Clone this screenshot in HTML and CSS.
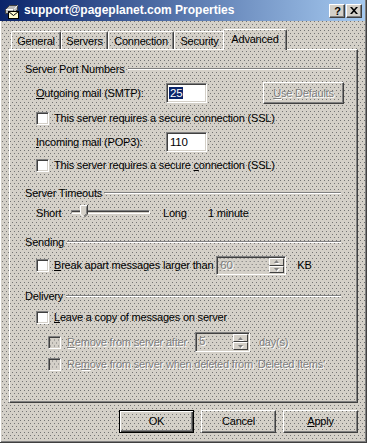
FILE: index.html
```html
<!DOCTYPE html>
<html>
<head>
<meta charset="utf-8">
<title>support@pageplanet.com Properties</title>
<link rel="stylesheet" href="styles.css">
</head>
<body>
<div class="window">
  <div class="titlebar">
    <svg class="ticon" width="16" height="16" viewBox="0 0 16 16">
      <path d="M1.5 6.5 L5.5 2.5 L13.5 2.5 L13.5 6.5 L9.5 10.5 L1.5 10.5 Z" fill="#b8b8b8" stroke="#404040"/>
      <path d="M2 6.5 L10 6.5 L13.5 2.5" fill="none" stroke="#ffffff"/>
      <path d="M9.5 6.5 L9.5 10.5" stroke="#606060"/>
      <rect x="4.5" y="8.5" width="10" height="7" fill="#fffbd0" stroke="#000"/>
      <path d="M4.5 8.5 L9.5 12.5 L14.5 8.5" fill="none" stroke="#000"/>
    </svg>
    <span class="title">support@pageplanet.com Properties</span>
    <div class="tbtns">
      <span class="tbtn help">?</span>
      <span class="tbtn">
        <svg width="8" height="7" viewBox="0 0 8 7"><path d="M0 0h2l2 2.3L6 0h2L5 3.5 8 7H6L4 4.7 2 7H0l3-3.5z" fill="#000"/></svg>
      </span>
    </div>
  </div>
  <div class="client">
    <div class="tabs">
      <div class="tab w-general">General</div>
      <div class="tab w-servers">Servers</div>
      <div class="tab w-connection">Connection</div>
      <div class="tab w-security">Security</div>
      <div class="tab selected w-advanced">Advanced</div>
    </div>
    <div class="panel">
      <div class="group-head"><span>Server Port Numbers</span><i class="etch"></i></div>
      <div class="row r-out">
        <span class="lbl"><u>O</u>utgoing mail (SMTP):</span>
        <span class="edit port"><span class="hl">25</span></span>
        <span class="btn defaults disabled"><u>U</u>se Defaults</span>
      </div>
      <div class="row r-cb1">
        <span class="cb"></span>
        <span class="cbtext">This server requires a secure connection (SSL)</span>
      </div>
      <div class="row r-in">
        <span class="lbl"><u>I</u>ncoming mail (POP3):</span>
        <span class="edit port">110</span>
      </div>
      <div class="row r-cb2">
        <span class="cb"></span>
        <span class="cbtext">This server requires a secure <u>c</u>onnection (SSL)</span>
      </div>

      <div class="group-head g2"><span>Server Timeouts</span><i class="etch"></i></div>
      <div class="row r-slider">
        <span class="short">Short</span>
        <span class="slider">
          <span class="track"></span>
          <svg class="thumb" width="9" height="13" viewBox="0 0 9 13">
            <path d="M0 0H8V9L4 13L0 9Z" fill="#d4d0c8"/>
            <path d="M0.5 9V0.5H7.5" fill="none" stroke="#fff"/>
            <path d="M0.5 9L4 12.5" fill="none" stroke="#fff"/>
            <path d="M7.5 0V9L4 12.5" fill="none" stroke="#404040"/>
            <path d="M6.5 1.5V8.6L4 11" fill="none" stroke="#808080"/>
          </svg>
        </span>
        <span class="long">Long</span>
        <span>1 minute</span>
      </div>

      <div class="group-head g3"><span>Sending</span><i class="etch"></i></div>
      <div class="row r-break">
        <span class="cb"></span>
        <span class="cbtext"><u>B</u>reak apart messages larger than</span>
        <span class="spin s60">
          <span class="spinval disabled">60</span>
          <span class="spinbtns">
            <span class="sbtn"><svg width="5" height="3" viewBox="0 0 5 3"><path d="M2.5 0L5 3H0Z" fill="#808080"/></svg></span>
            <span class="sbtn"><svg width="5" height="3" viewBox="0 0 5 3"><path d="M0 0H5L2.5 3Z" fill="#808080"/></svg></span>
          </span>
        </span>
        <span class="kb">KB</span>
      </div>

      <div class="group-head g4"><span>Delivery</span><i class="etch"></i></div>
      <div class="row r-leave">
        <span class="cb"></span>
        <span class="cbtext"><u>L</u>eave a copy of messages on server</span>
      </div>
      <div class="row r-after sub">
        <span class="cb dis"></span>
        <span class="cbtext disabled"><u>R</u>emove from server after</span>
        <span class="spin s5">
          <span class="spinval disabled">5</span>
          <span class="spinbtns">
            <span class="sbtn"><svg width="5" height="3" viewBox="0 0 5 3"><path d="M2.5 0L5 3H0Z" fill="#808080"/></svg></span>
            <span class="sbtn"><svg width="5" height="3" viewBox="0 0 5 3"><path d="M0 0H5L2.5 3Z" fill="#808080"/></svg></span>
          </span>
        </span>
        <span class="days disabled">day(s)</span>
      </div>
      <div class="row r-deleted sub">
        <span class="cb dis"></span>
        <span class="cbtext disabled">Re<u>m</u>ove from server when deleted from 'Deleted Items'</span>
      </div>
    </div>
    <div class="footer">
      <span class="btn default">OK</span>
      <span class="btn">Cancel</span>
      <span class="btn"><u>A</u>pply</span>
    </div>
  </div>
</div>
</body>
</html>
```

FILE: styles.css
```css
html, body {
  margin: 0;
  padding: 0;
}
body {
  font-family: "Liberation Sans", Arial, sans-serif;
  font-size: 11px;
  letter-spacing: -0.2px;
  line-height: 13px;
  color: #000;
  background: #d4d0c8;
}
u { text-decoration: underline; text-underline-offset: 1px; }

.window,
.tab,
.cb.dis,
.spin,
.btn {
  background-color: #d4d0c8;
  background-image:
    conic-gradient(from 270deg at 1px 1px, #747474 25%, transparent 0),
    conic-gradient(from 270deg at 1px 1px, #747474 25%, transparent 0);
  background-size: 4px 6px;
  background-position: 0 0, 2px 3px;
  background-attachment: fixed;
}

.window {
  width: 367px;
  height: 443px;
  box-sizing: border-box;
  display: flex;
  flex-direction: column;
  border-right: 1px solid #404040;
  border-bottom: 1px solid #404040;
  box-shadow: inset -1px -1px 0 #808080;
}

.titlebar {
  height: 21px;
  width: 365px;
  flex: none;
  display: flex;
  align-items: center;
  background: linear-gradient(to right, #0a246a, #a6caf0);
  padding-left: 4px;
  box-sizing: border-box;
}
.ticon { flex: none; }
.title {
  margin-left: 4px;
  color: #fff;
  font-weight: bold;
  font-size: 12px;
  letter-spacing: 0;
  white-space: nowrap;
}
.tbtns {
  margin-left: auto;
  margin-right: 3px;
  display: flex;
  gap: 1px;
}
.tbtn {
  width: 16px;
  height: 14px;
  box-sizing: border-box;
  display: flex;
  align-items: center;
  justify-content: center;
  background: #d4d0c8;
  border-top: 1px solid #fff;
  border-left: 1px solid #fff;
  border-right: 1px solid #404040;
  border-bottom: 1px solid #404040;
  box-shadow: inset -1px -1px 0 #808080;
  font-weight: bold;
  font-size: 11px;
  line-height: 12px;
  letter-spacing: 0;
}
.tbtn.help { padding-left: 1px; }

.client {
  flex: 1;
  display: flex;
  flex-direction: column;
  padding: 8px 0 0 9px;
  box-shadow: inset 1px 0 0 #fff;
}

.tabs {
  display: flex;
  align-items: flex-end;
  height: 20px;
  padding-left: 2px;
  position: relative;
  z-index: 2;
}
.tab {
  height: 18px;
  box-sizing: border-box;
  border-top: 1px solid #fff;
  border-left: 1px solid #fff;
  border-right: 1px solid #404040;
  box-shadow: inset -1px 0 0 #808080;
  border-radius: 2px 2px 0 0;
  display: flex;
  align-items: center;
  justify-content: center;
  padding-top: 1px;
  white-space: nowrap;
}
.w-general { width: 50px; }
.w-servers { width: 47px; }
.w-connection { width: 66px; }
.w-security { width: 51px; }
.tab.selected {
  width: 64px;
  height: 21px;
  margin-left: -2px;
  margin-bottom: -1px;
  padding-top: 0;
  padding-bottom: 2px;
  position: relative;
  z-index: 3;
}

.panel {
  width: 349px;
  height: 354px;
  box-sizing: border-box;
  border-top: 1px solid #fff;
  border-left: 1px solid #fff;
  border-right: 1px solid #404040;
  border-bottom: 1px solid #404040;
  box-shadow: inset -1px -1px 0 #808080;
  padding: 13px 13px 0 15px;
  display: flex;
  flex-direction: column;
}

.group-head {
  height: 13px;
  display: flex;
  align-items: center;
  white-space: nowrap;
}
.etch {
  flex: 1;
  height: 0;
  border-top: 1px solid #808080;
  border-bottom: 1px solid #fff;
  margin-left: 3px;
  margin-right: 3px;
  margin-top: -1px;
}
.g2, .g3, .g4 { margin-top: 15px; }

.row {
  display: flex;
  align-items: center;
  margin-left: 11px;
  white-space: nowrap;
}
.row.sub { margin-left: 23px; }

.r-out { margin-top: 6px; height: 22px; }
.r-cb1 { margin-top: 8px; height: 13px; }
.r-in { margin-top: 7px; height: 20px; }
.r-cb2 { margin-top: 7px; height: 13px; }
.r-slider { margin-top: 5px; height: 16px; }
.r-break { margin-top: 7px; height: 19px; }
.r-leave { margin-top: 8px; height: 13px; }
.r-after { margin-top: 8px; height: 20px; }
.r-deleted { margin-top: 5px; height: 14px; }

.lbl { width: 130px; flex: none; }

.cb {
  width: 13px;
  height: 13px;
  flex: none;
  box-sizing: border-box;
  background: #fff;
  border-top: 1px solid #808080;
  border-left: 1px solid #808080;
  border-right: 1px solid #fff;
  border-bottom: 1px solid #fff;
  box-shadow: inset 1px 1px 0 #404040, inset -1px -1px 0 #d4d0c8;
}
.cbtext { margin-left: 5px; }
.sub .cbtext { margin-left: 6px; }

.disabled {
  color: #808080;
  text-shadow: 1px 1px 0 #fff;
}

.edit {
  height: 20px;
  box-sizing: border-box;
  background: #fff;
  border-top: 1px solid #808080;
  border-left: 1px solid #808080;
  border-right: 1px solid #fff;
  border-bottom: 1px solid #fff;
  box-shadow: inset 1px 1px 0 #404040, inset -1px -1px 0 #d4d0c8;
  padding: 2px 0 0 3px;
  line-height: 14px;
  font-size: 11.5px;
}
.edit.port { width: 41px; }
.hl {
  background: #0a246a;
  color: #fff;
  padding: 0 1px;
  margin-left: -1px;
}

.btn {
  height: 23px;
  width: 75px;
  box-sizing: border-box;
  display: flex;
  align-items: center;
  justify-content: center;
  border-top: 1px solid #fff;
  border-left: 1px solid #fff;
  border-right: 1px solid #404040;
  border-bottom: 1px solid #404040;
  box-shadow: inset -1px -1px 0 #808080;
  flex: none;
}
.btn.defaults {
  width: 81px;
  height: 22px;
  margin-left: auto;
}
.btn.default {
  border: 1px solid #000;
  box-shadow: inset 1px 1px 0 #fff, inset -1px -1px 0 #404040, inset -2px -2px 0 #808080;
}

.short { width: 35px; flex: none; }
.slider {
  position: relative;
  width: 79px;
  height: 16px;
  flex: none;
}
.track {
  display: block;
  margin-top: 5px;
  height: 4px;
  box-sizing: border-box;
  border-top: 1px solid #808080;
  border-left: 1px solid #808080;
  border-bottom: 1px solid #fff;
  border-right: 1px solid #fff;
  box-shadow: inset 0 1px 0 #404040;
}
.thumb {
  position: absolute;
  left: 9px;
  top: 0;
}
.long { margin-left: 13px; width: 45px; flex: none; }

.spin {
  height: 19px;
  box-sizing: border-box;
  display: flex;
  border-top: 1px solid #808080;
  border-left: 1px solid #808080;
  border-right: 1px solid #fff;
  border-bottom: 1px solid #fff;
  box-shadow: inset 1px 1px 0 #404040, inset -1px -1px 0 #d4d0c8;
  padding: 1px;
  flex: none;
}
.s60 { width: 70px; margin-left: 3px; }
.s5 { width: 55px; margin-left: 8px; height: 20px; }
.spinval {
  flex: 1;
  padding-left: 2px;
  line-height: 15px;
  font-size: 11.5px;
}
.spinbtns {
  width: 15px;
  display: flex;
  flex-direction: column;
}
.sbtn {
  flex: 1;
  box-sizing: border-box;
  display: flex;
  align-items: center;
  justify-content: center;
  background: #d4d0c8;
  border-top: 1px solid #fff;
  border-left: 1px solid #fff;
  border-right: 1px solid #404040;
  border-bottom: 1px solid #404040;
}
.sbtn svg { filter: drop-shadow(1px 1px 0 #fff); }
.kb { margin-left: 11px; }
.days { margin-left: 9px; }

.footer {
  width: 349px;
  margin-top: 7px;
  display: flex;
  justify-content: flex-end;
  gap: 7px;
}
```
